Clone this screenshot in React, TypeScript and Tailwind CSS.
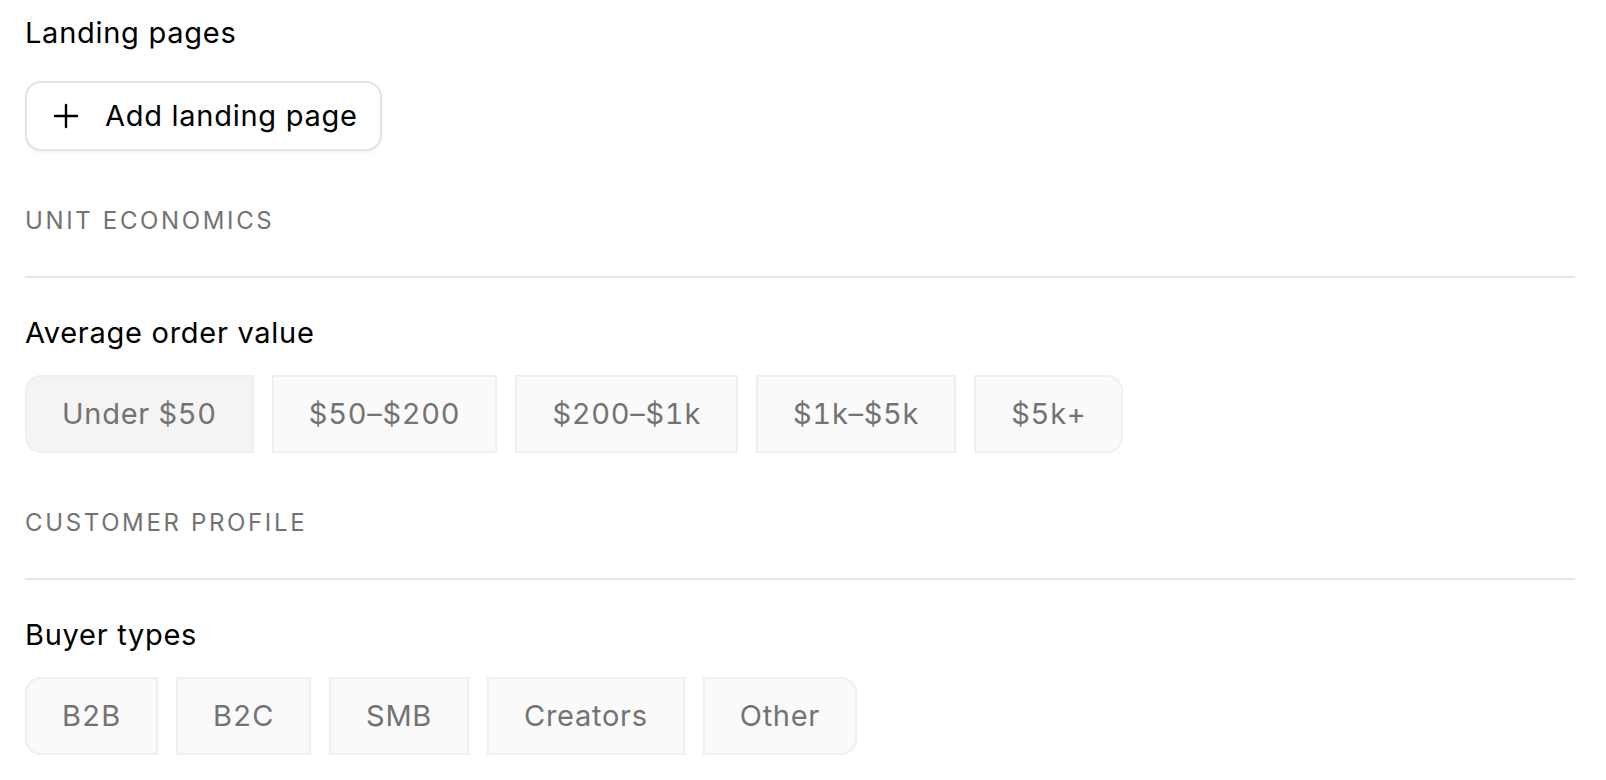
const orderValues = ["Under $50", "$50–$200", "$200–$1k", "$1k–$5k", "$5k+"];
const buyerTypes = ["B2B", "B2C", "SMB", "Creators", "Other"];

function SectionLabel({ children }: { children: string }) {
  return (
    <div className="mt-[55px]">
      <p className="text-[24px] leading-[29px] tracking-[0.11em] text-[#737373]">{children}</p>
      <div className="mt-[41px] h-[2px] bg-[#e5e5e5]" />
    </div>
  );
}

function ChipGroup({ items, selected }: { items: string[]; selected?: string }) {
  return (
    <div className="mt-[25px] flex gap-[18px]">
      {items.map((item, i) => (
        <button
          key={item}
          type="button"
          className={`border-2 border-[#efefef] px-[35px] py-[20px] text-[29px] leading-[34px] tracking-[0.025em] tabular-nums text-[#737373] ${
            item === selected ? "bg-[#f4f4f4]" : "bg-[#fafafa]"
          } ${i === 0 ? "rounded-l-[16px]" : ""} ${i === items.length - 1 ? "rounded-r-[16px]" : ""}`}
        >
          {item}
        </button>
      ))}
    </div>
  );
}

export default function App() {
  return (
    <div className="min-h-screen bg-white pl-[25px] pr-[31px] pt-[16px] font-['Inter',sans-serif] text-black">
      <h2 className="text-[29px] leading-[34px] tracking-[0.025em]">Landing pages</h2>
      <button
        type="button"
        className="mt-[31px] flex items-center gap-[26px] rounded-[16px] border-2 border-[#e3e3e3] bg-white py-[16px] pl-[26px] pr-[22px] text-[29px] leading-[34px] tracking-[0.025em] shadow-[0_2px_3px_rgba(0,0,0,0.05)]"
      >
        <svg width="26" height="26" viewBox="0 0 26 26" fill="none" stroke="black" strokeWidth="2.4" strokeLinecap="round">
          <path d="M13 2v22M2 13h22" />
        </svg>
        <span>Add landing page</span>
      </button>

      <SectionLabel>UNIT ECONOMICS</SectionLabel>
      <h3 className="mt-[38px] text-[29px] leading-[34px] tracking-[0.025em]">Average order value</h3>
      <ChipGroup items={orderValues} selected="Under $50" />

      <SectionLabel>CUSTOMER PROFILE</SectionLabel>
      <h3 className="mt-[38px] text-[29px] leading-[34px] tracking-[0.025em]">Buyer types</h3>
      <ChipGroup items={buyerTypes} />
    </div>
  );
}
